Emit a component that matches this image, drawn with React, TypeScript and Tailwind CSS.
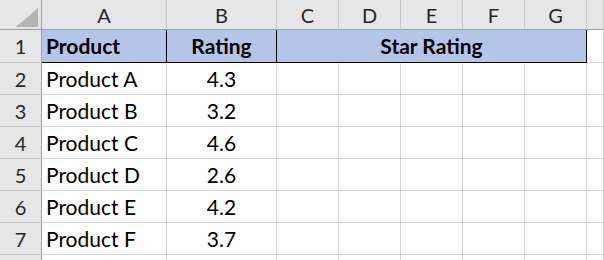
import React from "react";

const rows = [
  { name: "Product A", rating: "4.3" },
  { name: "Product B", rating: "3.2" },
  { name: "Product C", rating: "4.6" },
  { name: "Product D", rating: "2.6" },
  { name: "Product E", rating: "4.2" },
  { name: "Product F", rating: "3.7" },
];

const letters = ["A", "B", "C", "D", "E", "F", "G", ""];

const head = "flex items-end justify-center pb-[1px] bg-[#e6e6e6] border-r border-b border-r-[#c8c8c8] border-b-[#9f9f9f] text-[20px] leading-[26px] text-[#262626]";
const rowHead = "flex items-center justify-center bg-[#e6e6e6] border-r border-b border-r-[#9f9f9f] border-b-[#c8c8c8] text-[20px] text-[#262626]";
const cell = "flex items-center border-r border-b border-[#d4d4d4] text-[21px] text-black";
const blue = "flex items-center justify-center bg-[#b4c6e7] border-r border-b border-black text-[21px] font-bold text-black";

export default function App() {
  return (
    <div className="h-[260px] w-[604px] overflow-hidden bg-white font-['Lato',sans-serif]">
      <div className="grid grid-cols-[42px_125px_110px_62px_62px_62px_62px_62px_1fr] grid-rows-[30px_33px_repeat(7,32px)]">
        {/* corner */}
        <div className="relative bg-[#e6e6e6] border-r border-b border-r-[#9f9f9f] border-b-[#9f9f9f]">
          <div className="absolute left-[16px] top-[8px] h-[19px] w-[22px] bg-[#b5b5b5] [clip-path:polygon(100%_0,100%_100%,0_100%)]" />
        </div>
        {letters.map((l, i) => (
          <div key={i} className={head}>
            {l}
          </div>
        ))}

        {/* row 1 */}
        <div className={rowHead}>1</div>
        <div className={blue + " justify-start pl-[4px]"}>Product</div>
        <div className={blue}>Rating</div>
        <div className={blue + " col-span-5"}>Star Rating</div>
        <div className={cell} />

        {rows.map((r, i) => (
          <React.Fragment key={r.name}>
            <div className={rowHead}>{i + 2}</div>
            <div className={cell + " pl-[4px]"}>{r.name}</div>
            <div className={cell + " justify-center"}>{r.rating}</div>
            {[0, 1, 2, 3, 4, 5].map((c) => (
              <div key={c} className={cell} />
            ))}
          </React.Fragment>
        ))}

        <div className={rowHead} />
        {[0, 1, 2, 3, 4, 5, 6, 7].map((c) => (
          <div key={c} className={cell} />
        ))}
      </div>
    </div>
  );
}
